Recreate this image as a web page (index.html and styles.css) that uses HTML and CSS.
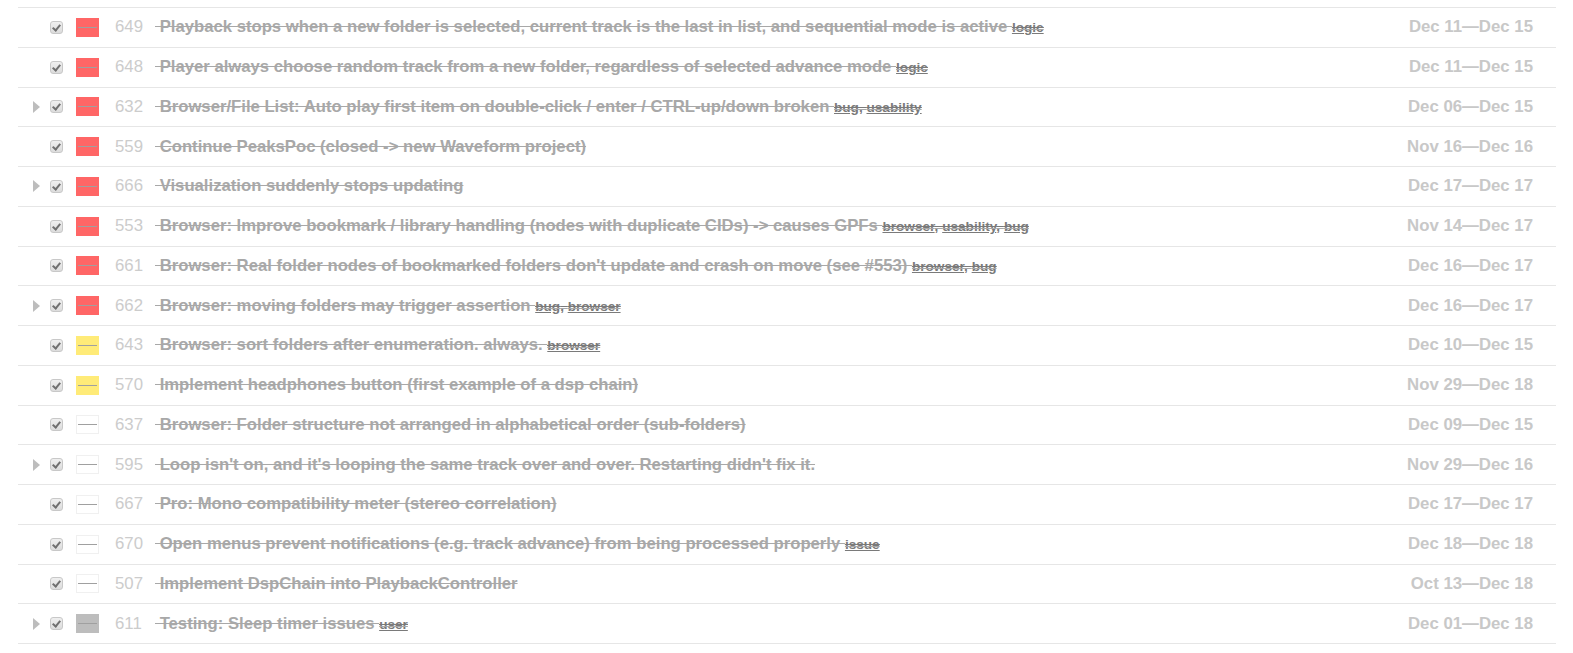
FILE: index.html
```html
<!DOCTYPE html>
<html>
<head>
<meta charset="utf-8">
<link rel="stylesheet" href="styles.css">
</head>
<body>
<div class="list">
  <div class="row"><span class="tog"></span><span class="cb"></span><span class="pri red"></span><span class="num">649</span><span class="title">&nbsp;Playback stops when a new folder is selected, current track is the last in list, and sequential mode is active <span class="tags"><a>logic</a></span></span><span class="date">Dec 11—Dec 15</span></div>
  <div class="row"><span class="tog"></span><span class="cb"></span><span class="pri red"></span><span class="num">648</span><span class="title">&nbsp;Player always choose random track from a new folder, regardless of selected advance mode <span class="tags"><a>logic</a></span></span><span class="date">Dec 11—Dec 15</span></div>
  <div class="row"><span class="tog on"></span><span class="cb"></span><span class="pri red"></span><span class="num">632</span><span class="title">&nbsp;Browser/File List: Auto play first item on double-click / enter / CTRL-up/down broken <span class="tags"><a>bug</a>, <a>usability</a></span></span><span class="date">Dec 06—Dec 15</span></div>
  <div class="row"><span class="tog"></span><span class="cb"></span><span class="pri red"></span><span class="num">559</span><span class="title">&nbsp;Continue PeaksPoc (closed -&gt; new Waveform project)</span><span class="date">Nov 16—Dec 16</span></div>
  <div class="row"><span class="tog on"></span><span class="cb"></span><span class="pri red"></span><span class="num">666</span><span class="title">&nbsp;Visualization suddenly stops updating</span><span class="date">Dec 17—Dec 17</span></div>
  <div class="row"><span class="tog"></span><span class="cb"></span><span class="pri red"></span><span class="num">553</span><span class="title">&nbsp;Browser: Improve bookmark / library handling (nodes with duplicate CIDs) -&gt; causes GPFs <span class="tags"><a>browser</a>, <a>usability</a>, <a>bug</a></span></span><span class="date">Nov 14—Dec 17</span></div>
  <div class="row"><span class="tog"></span><span class="cb"></span><span class="pri red"></span><span class="num">661</span><span class="title">&nbsp;Browser: Real folder nodes of bookmarked folders don't update and crash on move (see #553) <span class="tags"><a>browser</a>, <a>bug</a></span></span><span class="date">Dec 16—Dec 17</span></div>
  <div class="row"><span class="tog on"></span><span class="cb"></span><span class="pri red"></span><span class="num">662</span><span class="title">&nbsp;Browser: moving folders may trigger assertion <span class="tags"><a>bug</a>, <a>browser</a></span></span><span class="date">Dec 16—Dec 17</span></div>
  <div class="row"><span class="tog"></span><span class="cb"></span><span class="pri yellow"></span><span class="num">643</span><span class="title">&nbsp;Browser: sort folders after enumeration. always. <span class="tags"><a>browser</a></span></span><span class="date">Dec 10—Dec 15</span></div>
  <div class="row"><span class="tog"></span><span class="cb"></span><span class="pri yellow"></span><span class="num">570</span><span class="title">&nbsp;Implement headphones button (first example of a dsp chain)</span><span class="date">Nov 29—Dec 18</span></div>
  <div class="row"><span class="tog"></span><span class="cb"></span><span class="pri none"></span><span class="num">637</span><span class="title">&nbsp;Browser: Folder structure not arranged in alphabetical order (sub-folders)</span><span class="date">Dec 09—Dec 15</span></div>
  <div class="row"><span class="tog on"></span><span class="cb"></span><span class="pri none"></span><span class="num">595</span><span class="title">&nbsp;Loop isn't on, and it's looping the same track over and over. Restarting didn't fix it.</span><span class="date">Nov 29—Dec 16</span></div>
  <div class="row"><span class="tog"></span><span class="cb"></span><span class="pri none"></span><span class="num">667</span><span class="title">&nbsp;Pro: Mono compatibility meter (stereo correlation)</span><span class="date">Dec 17—Dec 17</span></div>
  <div class="row"><span class="tog"></span><span class="cb"></span><span class="pri none"></span><span class="num">670</span><span class="title">&nbsp;Open menus prevent notifications (e.g. track advance) from being processed properly <span class="tags"><a>issue</a></span></span><span class="date">Dec 18—Dec 18</span></div>
  <div class="row"><span class="tog"></span><span class="cb"></span><span class="pri none"></span><span class="num">507</span><span class="title">&nbsp;Implement DspChain into PlaybackController</span><span class="date">Oct 13—Dec 18</span></div>
  <div class="row"><span class="tog on"></span><span class="cb"></span><span class="pri gray"></span><span class="num">611</span><span class="title">&nbsp;Testing: Sleep timer issues <span class="tags"><a>user</a></span></span><span class="date">Dec 01—Dec 18</span></div>
</div>
</body>
</html>
```
FILE: styles.css
```css
html, body {
  margin: 0;
  padding: 0;
  background: #fff;
}
body {
  font-family: "Liberation Sans", Arial, sans-serif;
}
.list {
  margin: 7px 17px 0 18px;
  border-bottom: 1px solid #e6e6e6;
}
.row {
  box-sizing: border-box;
  height: 39.75px;
  border-top: 1px solid #e6e6e6;
  display: flex;
  align-items: center;
  white-space: nowrap;
}
.tog {
  width: 32px;
  height: 12px;
  flex: none;
  position: relative;
}
.tog.on::before {
  content: "";
  position: absolute;
  left: 15px;
  top: 0;
  border-style: solid;
  border-width: 6px 0 6px 7px;
  border-color: transparent transparent transparent #bdbdbd;
}
.cb {
  flex: none;
  box-sizing: border-box;
  width: 13px;
  height: 13px;
  border: 1px solid #c8c8c8;
  border-radius: 3px;
  background: linear-gradient(#efefef, #dcdcdc);
  position: relative;
}
.cb::after {
  content: "";
  position: absolute;
  left: 3px;
  top: 1px;
  width: 3px;
  height: 6px;
  border: solid #707070;
  border-width: 0 2px 2px 0;
  transform: rotate(40deg);
}
.pri {
  flex: none;
  box-sizing: border-box;
  width: 23px;
  height: 19px;
  margin-left: 13px;
  position: relative;
}
.pri::after {
  content: "";
  position: absolute;
  left: 2px;
  right: 2px;
  top: 9px;
  height: 1px;
  background: #a0a0a0;
}
.red { background: #ff6666; }
.yellow { background: #ffeb78; }
.gray { background: #bdbdbd; }
.none { border: 1px solid #f0f0f0; background: #fff; }
.none::after { top: 8px; left: 1px; right: 1px; }
.num {
  flex: none;
  width: 40px;
  margin-left: 16px;
  font-size: 16.8px;
  color: #cccccc;
}
.title {
  flex: 1;
  font-size: 16.7px;
  font-weight: bold;
  color: #a8a8a8;
  text-decoration: line-through;
  overflow: hidden;
}
.tags {
  font-size: 13.6px;
  color: #7a7a7a;
  text-decoration: line-through;
}
.tags a {
  text-decoration: underline line-through;
}
.date {
  flex: none;
  font-size: 16.8px;
  font-weight: bold;
  color: #c8c8c8;
  margin-right: 23px;
}
```
